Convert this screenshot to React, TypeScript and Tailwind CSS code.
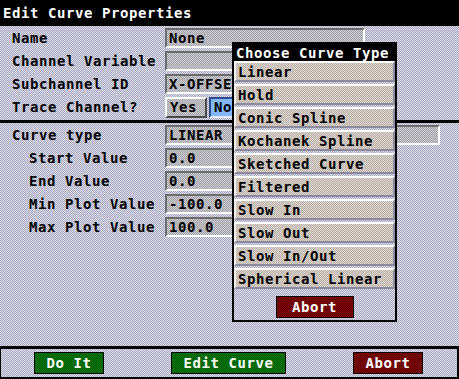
import React from 'react';

// 1px checker dither, like the old X/Motif panels
const panel =
  'bg-[image:conic-gradient(#a9a9c4_25%,#dcdce6_0_50%,#a9a9c4_0_75%,#dcdce6_0)] bg-[length:2px_2px]';
const well =
  'bg-[image:conic-gradient(#a3a2a8_25%,#cccbd0_0_50%,#a3a2a8_0_75%,#cccbd0_0)] bg-[length:2px_2px]';
const chip =
  'bg-[image:conic-gradient(#b9b1a9_25%,#ddd6ce_0_50%,#b9b1a9_0_75%,#ddd6ce_0)] bg-[length:2px_2px]';
const green =
  'bg-[image:conic-gradient(#005a00_25%,#0d7a0d_0_50%,#005a00_0_75%,#0d7a0d_0)] bg-[length:2px_2px]';
const red =
  'bg-[image:conic-gradient(#5e0000_25%,#820a0a_0_50%,#5e0000_0_75%,#820a0a_0)] bg-[length:2px_2px]';

const Field: React.FC<{ w: string; children?: React.ReactNode }> = ({ w, children }) => (
  <div
    className={`${w} ${well} h-[20px] border-2 border-t-[#6c6c6c] border-l-[#6c6c6c] border-b-white border-r-white pl-[2px] flex items-center leading-none`}
  >
    {children}
  </div>
);

const Row: React.FC<{ label: string; indent?: boolean; children: React.ReactNode }> = ({ label, indent, children }) => (
  <div className="flex items-center h-[20px]">
    <div className={`w-[165px] ${indent ? 'pl-[29px]' : 'pl-[12px]'} leading-none`}>{label}</div>
    {children}
  </div>
);

const Btn: React.FC<{ w: string; bg: string; children: React.ReactNode }> = ({ w, bg, children }) => (
  <div className={`${w} ${bg} h-[22px] border border-black text-white flex items-center justify-center leading-none`}>
    {children}
  </div>
);

const curveTypes = [
  'Linear',
  'Hold',
  'Conic Spline',
  'Kochanek Spline',
  'Sketched Curve',
  'Filtered',
  'Slow In',
  'Slow Out',
  'Slow In/Out',
  'Spherical Linear',
];

export default function App() {
  return (
    <div className="relative w-[459px] h-[379px] flex flex-col overflow-hidden text-black text-[14px] tracking-[0.57px] font-bold font-['DejaVu_Sans_Mono','Liberation_Mono',monospace]">
      <div className="h-[26px] shrink-0 bg-black text-white pl-[3px] flex items-center leading-none">
        Edit Curve Properties
      </div>

      {/* channel section */}
      <div className={`${panel} h-[94px] shrink-0 pt-[2px] flex flex-col gap-[3px]`}>
        <Row label="Name">
          <Field w="w-[200px]">None</Field>
        </Row>
        <Row label="Channel Variable">
          <Field w="w-[200px]" />
        </Row>
        <Row label="Subchannel ID">
          <Field w="w-[200px]">X-OFFSET</Field>
        </Row>
        <Row label="Trace Channel?">
          <div className={`${well} w-[42px] h-[21px] border-2 border-t-white border-l-white border-b-[#4a4a4a] border-r-[#4a4a4a] pl-[3px] flex items-center leading-none`}>
            Yes
          </div>
          <div className="ml-[2px] w-[42px] h-[21px] bg-[#82b6f4] border-2 border-t-[#2c4c8c] border-l-[#2c4c8c] border-b-[#dcecff] border-r-[#dcecff] pl-[3px] flex items-center leading-none">
            No
          </div>
        </Row>
      </div>

      <div className="h-[3px] shrink-0 bg-black" />

      {/* curve section */}
      <div className={`${panel} h-[223px] shrink-0 pt-[2px] flex flex-col gap-[3px]`}>
        <Row label="Curve type">
          <Field w="w-[275px]">LINEAR</Field>
        </Row>
        <Row label="Start Value" indent>
          <Field w="w-[200px]">0.0</Field>
        </Row>
        <Row label="End Value" indent>
          <Field w="w-[200px]">0.0</Field>
        </Row>
        <Row label="Min Plot Value" indent>
          <Field w="w-[200px]">-100.0</Field>
        </Row>
        <Row label="Max Plot Value" indent>
          <Field w="w-[200px]">100.0</Field>
        </Row>
      </div>

      <div className="h-[3px] shrink-0 bg-black" />

      {/* action bar */}
      <div className={`${panel} flex-1 border-l border-b-2 border-r-2 border-black pt-[3px] pl-[33px] pr-[34px] flex justify-between items-start`}>
        <Btn w="w-[70px]" bg={green}>Do It</Btn>
        <Btn w="w-[115px]" bg={green}>Edit Curve</Btn>
        <Btn w="w-[70px]" bg={red}>Abort</Btn>
      </div>

      {/* popup menu */}
      <div className={`${panel} absolute left-[232px] top-[42px] w-[165px] h-[280px] border-2 border-black flex flex-col`}>
        <div className="h-[17px] shrink-0 bg-black text-white pl-[2px] flex items-center leading-none">
          Choose Curve Type
        </div>
        <div className="flex flex-col gap-[2px]">
          {curveTypes.map((t) => (
            <div
              key={t}
              className={`${chip} h-[21px] border-2 border-t-white border-l-[#f2f0ee] border-b-[#8c8a9c] border-r-[#8c8a9c] pl-[2px] flex items-center leading-none`}
            >
              {t}
            </div>
          ))}
        </div>
        <div className="mt-[7px] flex justify-center">
          <Btn w="w-[78px]" bg={red}>Abort</Btn>
        </div>
      </div>
    </div>
  );
}
